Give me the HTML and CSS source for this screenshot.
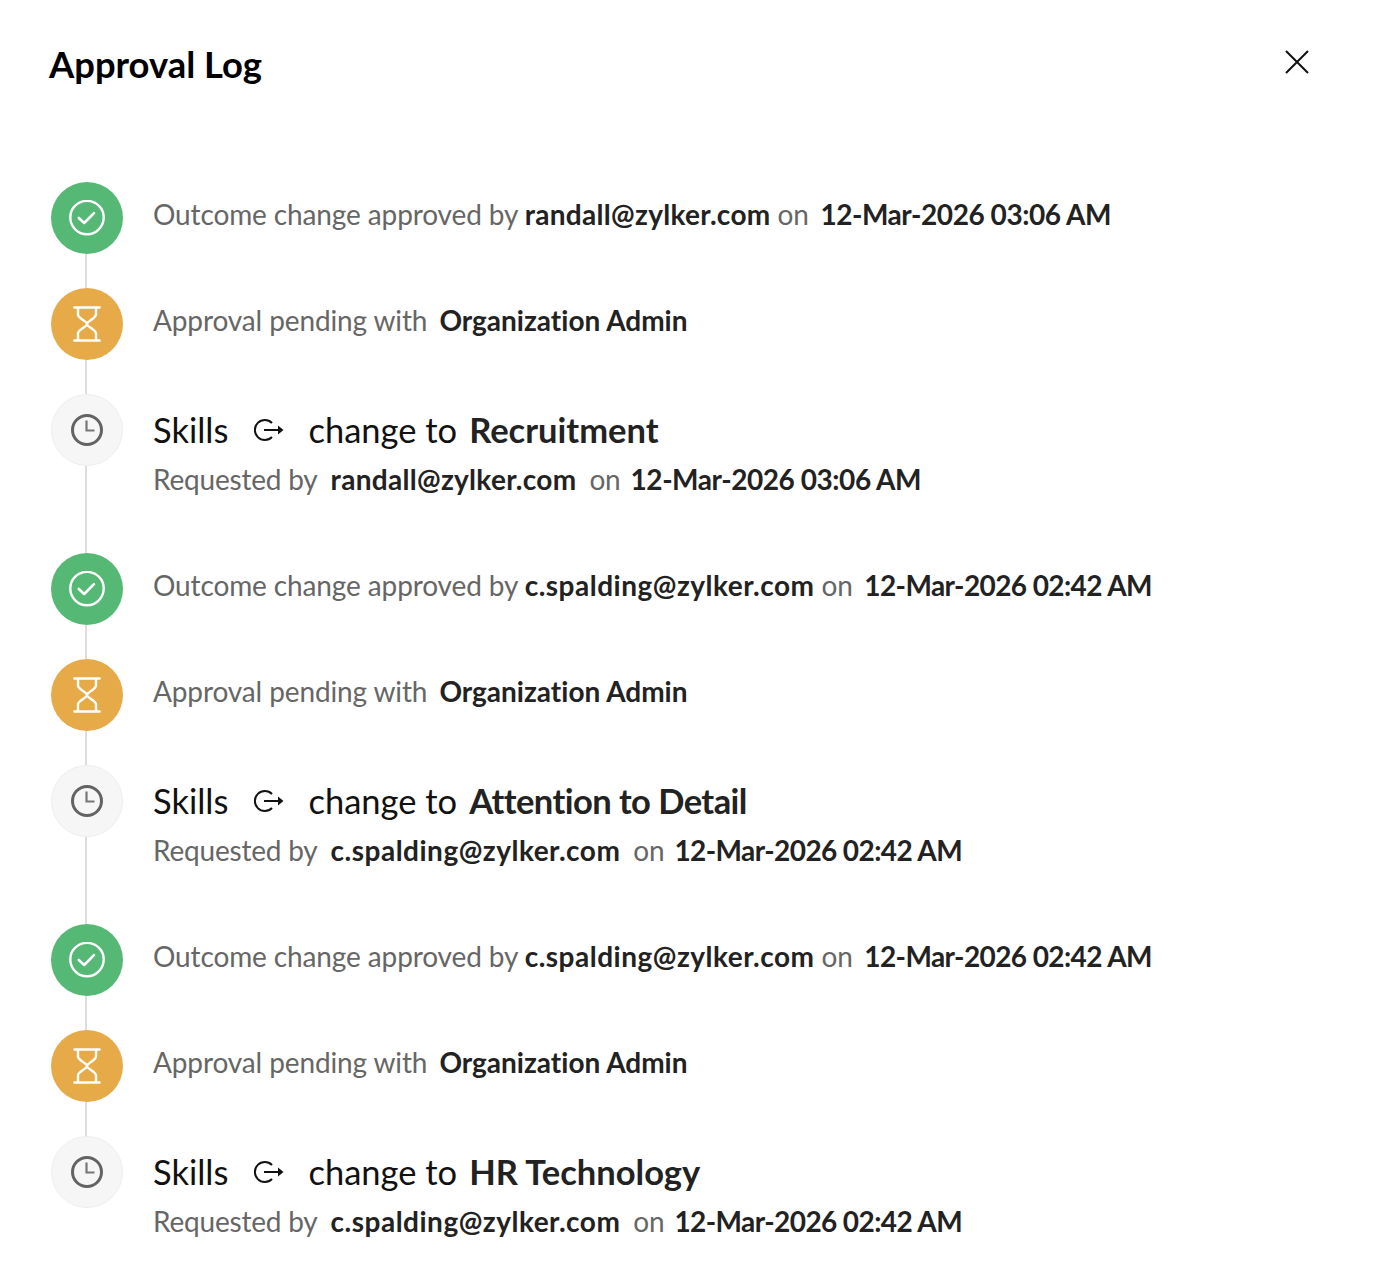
FILE: index.html
```html
<!DOCTYPE html>
<html lang="en">
<head>
  <meta charset="UTF-8">
  <title>Approval Log</title>
  <link rel="stylesheet" href="styles.css">
</head>
<body>
  <svg class="defs" width="0" height="0">
    <symbol id="i-check" viewBox="0 0 36 36">
      <circle cx="18" cy="17.500" r="16.700" fill="none" stroke="currentColor" stroke-width="2.400"/>
      <path d="M9.800 18l5.400 5 9.800-9.800" fill="none" stroke="currentColor" stroke-width="2.600" stroke-linecap="round" stroke-linejoin="round"/>
    </symbol>
    <symbol id="i-hourglass" viewBox="0 0 28 36">
      <path d="M1.500 1.500h25M1.500 34.500h25" fill="none" stroke="currentColor" stroke-width="2.600" stroke-linecap="round"/>
      <path d="M5 1.500v7c0 4 9 6.500 9 9.500s-9 5.500-9 9.500v7M23 1.500v7c0 4-9 6.500-9 9.500s9 5.500 9 9.500v7" fill="none" stroke="currentColor" stroke-width="2.400"/>
    </symbol>
    <symbol id="i-clock" viewBox="0 0 32 32">
      <circle cx="16" cy="16" r="14.500" fill="none" stroke="currentColor" stroke-width="3"/>
      <path d="M15.500 6.500v10h8" fill="none" stroke="#777" stroke-width="2.200"/>
    </symbol>
    <symbol id="i-arrow" viewBox="0 0 30 22">
      <path d="M18 4a10 10 0 1 0 0 14" fill="none" stroke="currentColor" stroke-width="2"/>
      <path d="M10 11h18" fill="none" stroke="currentColor" stroke-width="2"/>
      <path d="M24 6.500l5.500 4.500-5.500 4.500z" fill="currentColor"/>
    </symbol>
  </svg>

  <div class="head">
    <h1>Approval Log</h1>
    <svg class="close" viewBox="0 0 24 24"><path d="M1 1l22 22M23 1L1 23" fill="none" stroke="#111" stroke-width="2"/></svg>
  </div>

  <div class="log">
    <div class="step">
      <div class="dot green"><svg class="ico-check"><use href="#i-check"/></svg></div>
      <p class="line">Outcome change approved by <b class="mail">randall@zylker.com</b> on <b class="when">12-Mar-2026 03:06 AM</b></p>
    </div>
    <div class="step">
      <div class="dot orange"><svg class="ico-hour"><use href="#i-hourglass"/></svg></div>
      <p class="line">Approval pending with <b class="gap">Organization Admin</b></p>
    </div>
    <div class="step request">
      <div class="dot grey"><svg class="ico-clock"><use href="#i-clock"/></svg></div>
      <div class="req-text">
        <p class="change">
          <span>Skills</span>
          <svg class="ico-arrow"><use href="#i-arrow"/></svg>
          <span>change to</span>
          <b>Recruitment</b>
        </p>
        <p class="by"><span>Requested by</span><b class="mail">randall@zylker.com</b><span>on</span><b class="when">12-Mar-2026 03:06 AM</b></p>
      </div>
    </div>

    <div class="step">
      <div class="dot green"><svg class="ico-check"><use href="#i-check"/></svg></div>
      <p class="line alt">Outcome change approved by <b class="mail">c.spalding@zylker.com</b> on <b class="when">12-Mar-2026 02:42 AM</b></p>
    </div>
    <div class="step">
      <div class="dot orange"><svg class="ico-hour"><use href="#i-hourglass"/></svg></div>
      <p class="line">Approval pending with <b class="gap">Organization Admin</b></p>
    </div>
    <div class="step request">
      <div class="dot grey"><svg class="ico-clock"><use href="#i-clock"/></svg></div>
      <div class="req-text">
        <p class="change">
          <span>Skills</span>
          <svg class="ico-arrow"><use href="#i-arrow"/></svg>
          <span>change to</span>
          <b class="tight">Attention to Detail</b>
        </p>
        <p class="by alt"><span>Requested by</span><b class="mail">c.spalding@zylker.com</b><span>on</span><b class="when">12-Mar-2026 02:42 AM</b></p>
      </div>
    </div>

    <div class="step">
      <div class="dot green"><svg class="ico-check"><use href="#i-check"/></svg></div>
      <p class="line alt">Outcome change approved by <b class="mail">c.spalding@zylker.com</b> on <b class="when">12-Mar-2026 02:42 AM</b></p>
    </div>
    <div class="step">
      <div class="dot orange"><svg class="ico-hour"><use href="#i-hourglass"/></svg></div>
      <p class="line">Approval pending with <b class="gap">Organization Admin</b></p>
    </div>
    <div class="step request last">
      <div class="dot grey"><svg class="ico-clock"><use href="#i-clock"/></svg></div>
      <div class="req-text">
        <p class="change">
          <span>Skills</span>
          <svg class="ico-arrow"><use href="#i-arrow"/></svg>
          <span>change to</span>
          <b>HR Technology</b>
        </p>
        <p class="by alt"><span>Requested by</span><b class="mail">c.spalding@zylker.com</b><span>on</span><b class="when">12-Mar-2026 02:42 AM</b></p>
      </div>
    </div>
  </div>
</body>
</html>
```

FILE: styles.css
```css
body {
  font-family: Lato, sans-serif;
  font-variant-ligatures: none;
  margin: 0;
  background: white;
  color: #222;
}

.defs {
  position: absolute;
}

.head {
  display: flex;
  justify-content: space-between;
  padding: 42px 75px 0 49px;
  height: 182px;
  box-sizing: border-box;
}

h1 {
  margin: 0;
  font-size: 36.4px;
  line-height: 44px;
  font-weight: 700;
  color: #000;
}

.close {
  width: 24px;
  height: 24px;
  margin-top: 8px;
}

.log {
  padding-left: 51px;
}

.step {
  position: relative;
  display: flex;
  gap: 30px;
  height: 106px;
}

.step.request {
  height: 159px;
}

/* connector under each dot */
.step::before {
  content: "";
  position: absolute;
  left: 34px;
  top: 72px;
  bottom: 0;
  width: 2px;
  background: #ddd;
}

.step.last::before {
  display: none;
}

.dot {
  width: 72px;
  height: 72px;
  flex-shrink: 0;
  border-radius: 50%;
  box-sizing: border-box;
  display: flex;
  align-items: center;
  justify-content: center;
  color: white;
}

.green {
  background: #55b975;
}

.orange {
  background: #e6ab48;
}

.grey {
  background: #f6f6f6;
  border: 1px solid #eee;
  color: #636363;
}

.ico-check {
  width: 36px;
  height: 36px;
}

.ico-hour {
  width: 28px;
  height: 36px;
}

.ico-clock {
  width: 32px;
  height: 32px;
}

.ico-arrow {
  width: 30px;
  height: 22px;
}

p {
  margin: 0;
}

.line {
  font-size: 28px;
  line-height: 34px;
  padding-top: 15px;
  color: #666;
  letter-spacing: -0.12px;
}

b {
  font-weight: 700;
  color: #222;
}

.mail {
  letter-spacing: 0.3px;
}

.alt .mail {
  letter-spacing: 0.5px;
}

.when {
  letter-spacing: -0.45px;
}

.alt .when {
  letter-spacing: -0.6px;
}

.line .gap {
  margin-left: 5px;
  letter-spacing: 0;
}

.line .when {
  margin-left: 4.5px;
}

.change {
  display: flex;
  align-items: center;
  font-size: 34.5px;
  line-height: 44px;
  padding-top: 14px;
  color: #111;
}

.change svg {
  margin: 0 24px 0 26px;
}

.change b {
  margin-left: 12px;
}

.change .tight {
  letter-spacing: -0.55px;
}

.by {
  display: flex;
  gap: 13px;
  font-size: 28px;
  line-height: 34px;
  margin-top: 10px;
  color: #666;
  letter-spacing: -0.2px;
}

.by .when {
  margin-left: -3px;
}
```
